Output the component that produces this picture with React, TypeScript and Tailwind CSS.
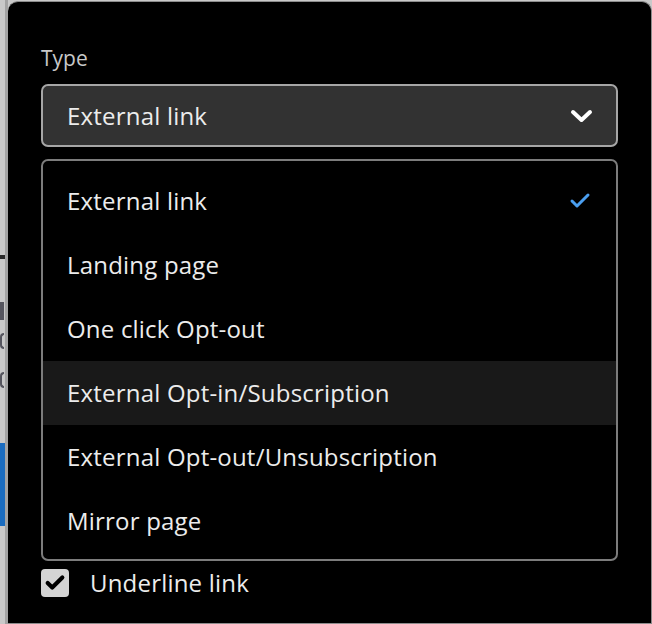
import { Check } from 'lucide-react';

const OPTIONS = [
  'External link',
  'Landing page',
  'One click Opt-out',
  'External Opt-in/Subscription',
  'External Opt-out/Unsubscription',
  'Mirror page',
];

const SELECTED = 'External link';
const HOVERED = 'External Opt-in/Subscription';

function Chevron() {
  return (
    <svg width="23" height="14" viewBox="0 0 23 14" fill="none">
      <polyline
        points="3,3 11.5,11 20,3"
        stroke="white"
        strokeWidth="4"
        strokeLinecap="round"
        strokeLinejoin="round"
      />
    </svg>
  );
}

export default function App() {
  return (
    <div
      className="flex h-[624px] w-[652px] overflow-hidden bg-[#c9c9c9]"
      style={{ fontFamily: '"Open Sans", Lato, sans-serif' }}
    >
      {/* page behind the dialog */}
      <div className="relative w-[8px] shrink-0 border-r-[3px] border-[#a3a3a3]">
        <div className="absolute left-0 top-[255px] h-[4px] w-[5px] bg-[#2a2a2a]" />
        <div className="absolute left-0 top-[302px] h-[18px] w-[4px] bg-[#55555e]" />
        <div className="absolute left-0 top-[333px] h-[16px] w-[4px] rounded-l-full border-2 border-r-0 border-[#55555e]" />
        <div className="absolute left-0 top-[372px] h-[16px] w-[4px] rounded-l-full border-2 border-r-0 border-[#55555e]" />
        <div className="absolute left-0 top-[443px] h-[83px] w-[5px] bg-[#1a6cc0]" />
      </div>

      <div className="mt-[1px] flex-1 rounded-tl-[10px] rounded-tr-[10px] border border-[#8c8c8c] border-l-0 bg-black pl-[33px] pr-[33px] pt-[43px] tracking-[0.2px]">
        <div className="text-[21px] leading-[26px] tracking-normal text-[#c8c8c8]">Type</div>

        <button className="mt-[13px] flex h-[63px] w-full items-center justify-between rounded-[7px] border-2 border-[#a6a6a6] bg-[#323232] pl-[24px] pr-[23px] text-[24px] text-[#ececec]">
          <span>External link</span>
          <Chevron />
        </button>

        <div className="mt-[12px] overflow-hidden rounded-[7px] border-2 border-[#7c7c7c] bg-black pb-[6px] pt-[8px]">
          {OPTIONS.map((o) => (
            <div
              key={o}
              className={`flex h-[64px] items-center justify-between pl-[24px] pr-[24px] text-[24px] text-[#ececec] ${
                o === HOVERED ? 'bg-[#191919]' : ''
              }`}
            >
              <span>{o}</span>
              {o === SELECTED && (
                <Check className="h-[24px] w-[24px] text-[#4b9ff0]" strokeWidth={3} />
              )}
            </div>
          ))}
        </div>

        <label className="mt-[8px] flex h-[28px] items-center gap-[21px] text-[24px] leading-[28px] text-[#ececec]">
          <span className="flex h-[28px] w-[28px] items-center justify-center rounded-[4px] bg-[#d4d4d4]">
            <Check className="h-[22px] w-[22px] text-black" strokeWidth={4.5} />
          </span>
          Underline link
        </label>
      </div>
    </div>
  );
}
